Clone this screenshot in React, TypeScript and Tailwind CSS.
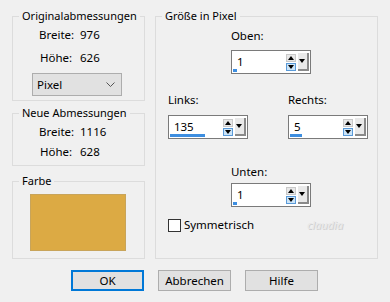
import React from 'react';

const font = { fontFamily: '"Noto Sans", "Open Sans", sans-serif' };

function Group({ label, className, children }: { label: string; className?: string; children?: React.ReactNode }) {
  return (
    <div className={`relative border border-[#dcdcdc] ${className ?? ''}`}>
      {/* legend sits on the top border */}
      <span className="absolute -top-[9px] left-[6px] bg-[#f0f0f0] px-[3px] text-[11px] leading-[16px] text-black">
        {label}
      </span>
      {children}
    </div>
  );
}

function Spinner({ value, bar }: { value: string; bar: number }) {
  return (
    <div className="flex h-[24px] w-[80px] border border-[#7a7a7a] bg-white">
      <div className="relative flex-1">
        <span className="absolute left-[5px] top-[3px] text-[11.5px] leading-[16px] text-black">{value}</span>
        <div className="absolute bottom-[1px] left-[1px] h-[3px] bg-[#3d8ee0]" style={{ width: bar }} />
      </div>
      <div className="flex w-[10px] flex-col justify-center gap-[1px] py-[2px]">
        <div className="flex h-[8px] items-center justify-center border border-[#c9c9c9] bg-[#e8e8e8]">
          <svg width="6" height="4" viewBox="0 0 6 4"><path d="M0 4 L3 0 L6 4 Z" fill="#000" /></svg>
        </div>
        <div className="flex h-[8px] items-center justify-center border border-[#5a9ad8] bg-[#cce4f7]">
          <svg width="6" height="4" viewBox="0 0 6 4"><path d="M0 0 L3 4 L6 0 Z" fill="#000" /></svg>
        </div>
      </div>
      <div className="my-[2px] ml-[2px] mr-[1px] flex w-[11px] items-center justify-center border-b-2 border-r-2 border-b-[#8a8a8a] border-r-[#8a8a8a] bg-[#e9e9e9]">
        <svg width="6" height="4" viewBox="0 0 6 4"><path d="M0 0 L3 4 L6 0 Z" fill="#000" /></svg>
      </div>
    </div>
  );
}

function DimRows({ w, h, gap }: { w: string; h: string; gap: string }) {
  return (
    <div className={`flex flex-col ${gap} pl-[26px] text-[11.5px] leading-[16px] text-black`}>
      <div className="flex">
        <span className="w-[41px]">Breite:</span>
        <span>{w}</span>
      </div>
      <div className="flex">
        <span className="w-[41px] pl-[1px]">Höhe:</span>
        <span>{h}</span>
      </div>
    </div>
  );
}

function Btn({ label, focused }: { label: string; focused?: boolean }) {
  return (
    <button
      className={`h-[21px] w-[73px] bg-[#e1e1e1] text-[11.5px] leading-[16px] text-black ${
        focused ? 'border-2 border-[#0078d7]' : 'border border-[#adadad]'
      }`}
    >
      {label}
    </button>
  );
}

export default function App() {
  return (
    <div className="flex h-[302px] w-[390px] flex-col bg-[#f0f0f0] px-[12px] pt-[16px]" style={font}>
      <div className="flex gap-[10px]">
        <div className="flex w-[134px] flex-col">
          <Group label="Originalabmessungen" className="h-[85px] pt-[10px]">
            <DimRows w="976" h="626" gap="gap-[7px]" />
            <div className="ml-[19px] mt-[7px] flex h-[23px] w-[90px] items-center justify-between border border-[#adadad] bg-[#e1e1e1] pl-[4px] pr-[6px] text-[11.5px] text-black">
              <span>Pixel</span>
              <svg width="9" height="5" viewBox="0 0 9 5"><path d="M0.5 0.5 L4.5 4.5 L8.5 0.5" stroke="#555" fill="none" /></svg>
            </div>
          </Group>
          <Group label="Neue Abmessungen" className="mt-[12px] h-[53px] pt-[10px]">
            <DimRows w="1116" h="628" gap="gap-[4px]" />
          </Group>
          <Group label="Farbe" className="mt-[15px] h-[78px] pl-[17px] pt-[12px]">
            <div className="h-[57px] w-[96px] border border-[#c8a45a] bg-[#dcaa44]" />
          </Group>
        </div>

        <Group label="Größe in Pixel" className="h-[243px] w-[225px] text-[11.5px] leading-[16px] text-black">
          <div className="ml-[75px] mt-[11px] flex flex-col gap-[6px]">
            <span>Oben:</span>
            <Spinner value="1" bar={4} />
          </div>
          <div className="mt-[18px] flex gap-[40px] pl-[12px]">
            <div className="flex flex-col gap-[7px]">
              <span>Links:</span>
              <Spinner value="135" bar={35} />
            </div>
            <div className="flex flex-col gap-[7px]">
              <span>Rechts:</span>
              <Spinner value="5" bar={12} />
            </div>
          </div>
          <div className="ml-[75px] mt-[25px] flex flex-col gap-[3px]">
            <span>Unten:</span>
            <Spinner value="1" bar={4} />
          </div>
          <div className="ml-[12px] mt-[10px] flex items-center gap-[3px]">
            <div className="h-[13px] w-[13px] border border-[#333] bg-white" />
            <span>Symmetrisch</span>
            <span className="ml-[50px] text-[11px] italic text-[#e8e8e8] [text-shadow:1px_1px_0_#cfcfcf]">claudia</span>
          </div>
        </Group>
      </div>

      <div className="mt-[11px] flex gap-[14px] pl-[59px]">
        <Btn label="OK" focused />
        <Btn label="Abbrechen" />
        <Btn label="Hilfe" />
      </div>
    </div>
  );
}
